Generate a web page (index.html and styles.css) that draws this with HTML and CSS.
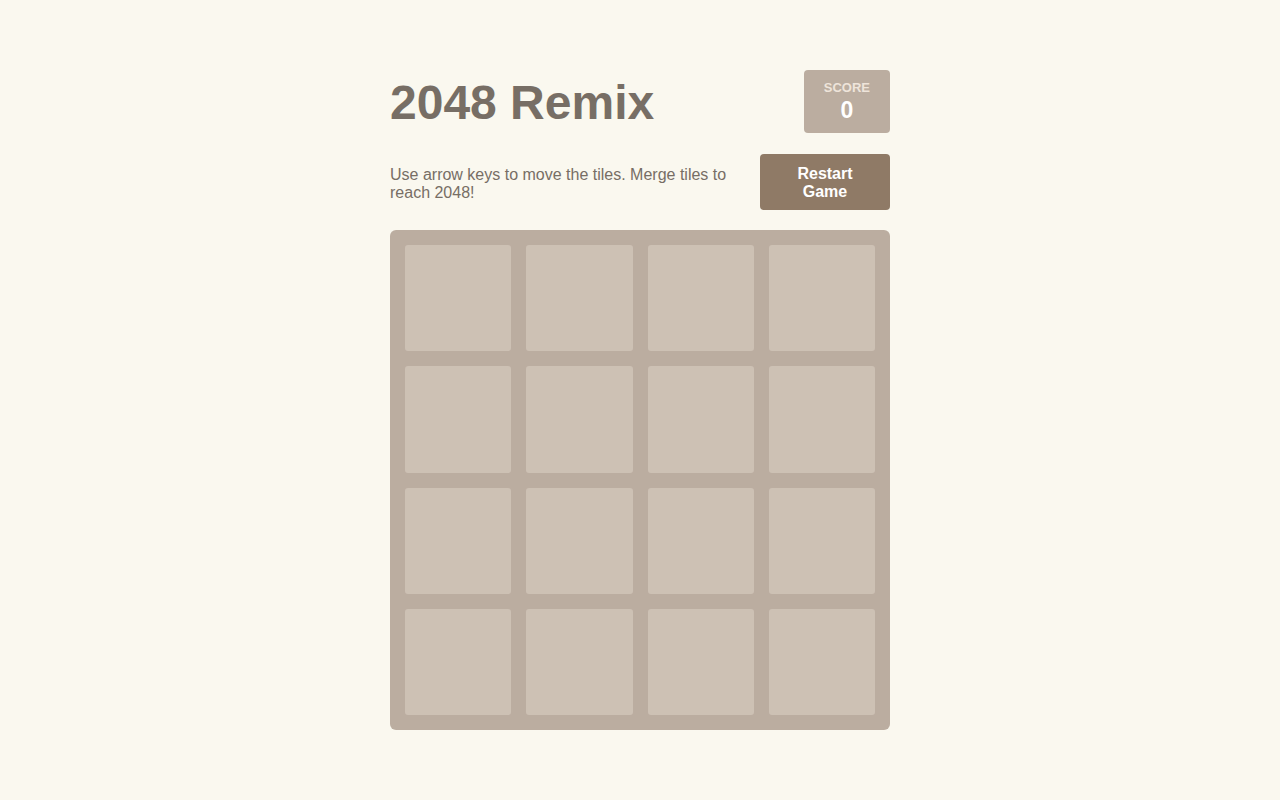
FILE: index.html
```html
<!DOCTYPE html>
<html lang="en">
<head>
<meta charset="utf-8">
<title>2048 Remix</title>
<link rel="stylesheet" href="styles.css">
</head>
<body>
<div class="container">
  <div class="header">
    <h1 class="title">2048 Remix</h1>
    <div class="score-box">
      <div class="score-label">SCORE</div>
      <div class="score-value">0</div>
    </div>
  </div>
  <div class="intro">
    <p class="desc">Use arrow keys to move the tiles. Merge tiles to reach 2048!</p>
    <button class="restart">Restart Game</button>
  </div>
  <div class="grid">
    <div class="cell"></div><div class="cell"></div><div class="cell"></div><div class="cell"></div>
    <div class="cell"></div><div class="cell"></div><div class="cell"></div><div class="cell"></div>
    <div class="cell"></div><div class="cell"></div><div class="cell"></div><div class="cell"></div>
    <div class="cell"></div><div class="cell"></div><div class="cell"></div><div class="cell"></div>
  </div>
</div>
</body>
</html>
```

FILE: styles.css
```css
html, body {
  margin: 0;
  padding: 0;
  background: #faf8ef;
  font-family: "Liberation Sans", Arial, sans-serif;
  color: #776e65;
}
.container {
  width: 500px;
  margin: 0 auto;
  padding-top: 70px;
}
.header {
  display: flex;
  justify-content: space-between;
  align-items: flex-start;
  height: 63px;
}
.title {
  margin: 0;
  padding-top: 5px;
  font-size: 48px;
  font-weight: bold;
  line-height: 56px;
  color: #776e65;
}
.score-box {
  background: #bbada0;
  border-radius: 4px;
  padding: 10px 20px 9px;
  height: 44px;
  text-align: center;
  color: #fff;
}
.score-label {
  font-size: 13px;
  line-height: 16px;
  font-weight: bold;
  color: #eee4da;
}
.score-value {
  font-size: 23px;
  line-height: 28px;
  font-weight: bold;
}
.intro {
  display: flex;
  justify-content: space-between;
  align-items: center;
  gap: 20px;
  margin-top: 21px;
}
.desc {
  margin: 0;
  padding-top: 3px;
  font-size: 16px;
  line-height: 18px;
  flex: 1;
}
.restart {
  width: 130px;
  height: 56px;
  padding: 11px 20px 9px;
  border: none;
  border-radius: 4px;
  background: #8f7a66;
  color: #fff;
  font-family: "Liberation Sans", Arial, sans-serif;
  font-size: 16px;
  line-height: 18px;
  font-weight: bold;
  flex: none;
}
.grid {
  margin-top: 20px;
  background: #bbada0;
  border-radius: 6px;
  padding: 15px;
  display: grid;
  grid-template-columns: repeat(4, 1fr);
  grid-auto-rows: 106.25px;
  gap: 15px;
}
.cell {
  background: #cdc1b4;
  border-radius: 3px;
}
```
